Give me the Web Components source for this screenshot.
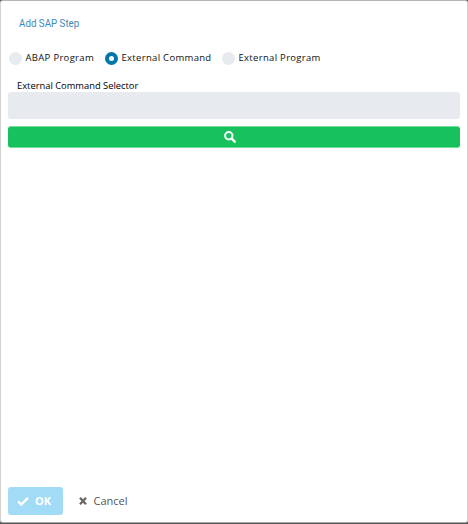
<!DOCTYPE html>
<html lang="en"><head><meta charset="utf-8"><title>Add SAP Step</title>
<style>html,body{margin:0;height:100%;background:#555}body{font-family:"Open Sans",sans-serif;font-size:10px;color:#111}</style></head>
<body>
<sap-dialog heading="Add SAP Step">
  <radio-group>
    <radio-option style="width:96px">ABAP Program</radio-option>
    <radio-option checked style="width:117px">External Command</radio-option>
    <radio-option>External Program</radio-option>
  </radio-group>
  <selector-field label="External Command Selector"></selector-field>
  <dialog-button slot="footer" kind="ok">OK</dialog-button>
  <dialog-button slot="footer" kind="cancel">Cancel</dialog-button>
</sap-dialog>
<script>
const make=(name,render)=>customElements.define(name,class extends HTMLElement{
  constructor(){super();this.attachShadow({mode:'open'})}
  connectedCallback(){this.shadowRoot.innerHTML=render(this)}
});
make('radio-group',()=>`<style>:host{display:flex;height:14px;align-items:center;padding-left:1px}</style><slot></slot>`);
make('radio-option',()=>`<style>
:host{display:flex;align-items:center;line-height:14px;white-space:nowrap;font-size:9.5px;letter-spacing:.31px}
span{padding-bottom:1px}
i{box-sizing:border-box;width:13px;height:13px;border-radius:50%;background:#e7eaef;margin-right:3.5px;flex:none}
:host([checked]) i{background:#fff;border:4px solid #0077a8}
</style><i></i><span><slot></slot></span>`);
make('selector-field',el=>`<style>
:host{display:block;margin-top:14px}
label{display:block;height:13px;line-height:13px;padding-left:9px;color:#000;white-space:nowrap;font-size:9.35px}
.input{height:27px;background:#e7eaef;border-radius:3px}
button{display:flex;box-sizing:border-box;width:100%;height:22px;margin-top:7px;border:solid #73dc9b;border-width:1px 0;border-radius:3px;background:#17c25e;align-items:center;justify-content:center;padding:0 8px 0 0}
svg{width:12px;height:12px;display:block}
</style><label>${el.getAttribute('label')}</label><div class="input"></div>
<button aria-label="Search"><svg viewBox="0 0 12 12" fill="none" stroke="#fff"><circle cx="4.8" cy="4.8" r="3.7" stroke-width="2"/><path d="M7.7 7.7 10.7 10.7" stroke-width="2.4" stroke-linecap="round"/></svg></button>`);
make('dialog-button',el=>{
 const ok=el.getAttribute('kind')==='ok';
 return `<style>
:host{display:flex;align-items:center;box-sizing:border-box;height:28px;line-height:28px;font-size:11px;font-weight:500;color:#555}
:host([kind=ok]){width:55px;padding-left:9px;border-radius:3px;background:#a2dbf5;color:#fff;font-weight:700}
:host([kind=cancel]){padding-left:16px}
svg{display:block;width:${ok?12:8}px;height:${ok?12:8}px;margin-right:${ok?6:6.5}px}
</style>${ok?'<svg viewBox="0 0 12 12"><path d="M1 6.4 4.2 9.6 11 2.8" fill="none" stroke="#fff" stroke-width="2.5"/></svg>':'<svg viewBox="0 0 8 8"><path d="M1 .8 7 7.2M7 .8 1 7.2" fill="none" stroke="#666" stroke-width="2.3"/></svg>'}<span><slot></slot></span>`});
make('sap-dialog',el=>`<style>
:host{display:flex;flex-direction:column;box-sizing:border-box;width:468px;height:523px;padding:0 7px 7px;border:1px solid #d3d3d3;border-top-color:#b5b5b5;border-bottom-color:#aaa;border-radius:3px;background:#fff}
header{height:50px;padding:14px 0 0 11px;box-sizing:border-box}
h1{margin:0;font:400 11.5px/16px Roboto,sans-serif;color:#3c8ab3;display:inline-block;transform:scaleX(.85);transform-origin:0 0;white-space:nowrap}
footer{display:flex;margin-top:auto}
</style><header><h1>${el.getAttribute('heading')}</h1></header><slot></slot><footer><slot name="footer"></slot></footer>`);
</script></body></html>
